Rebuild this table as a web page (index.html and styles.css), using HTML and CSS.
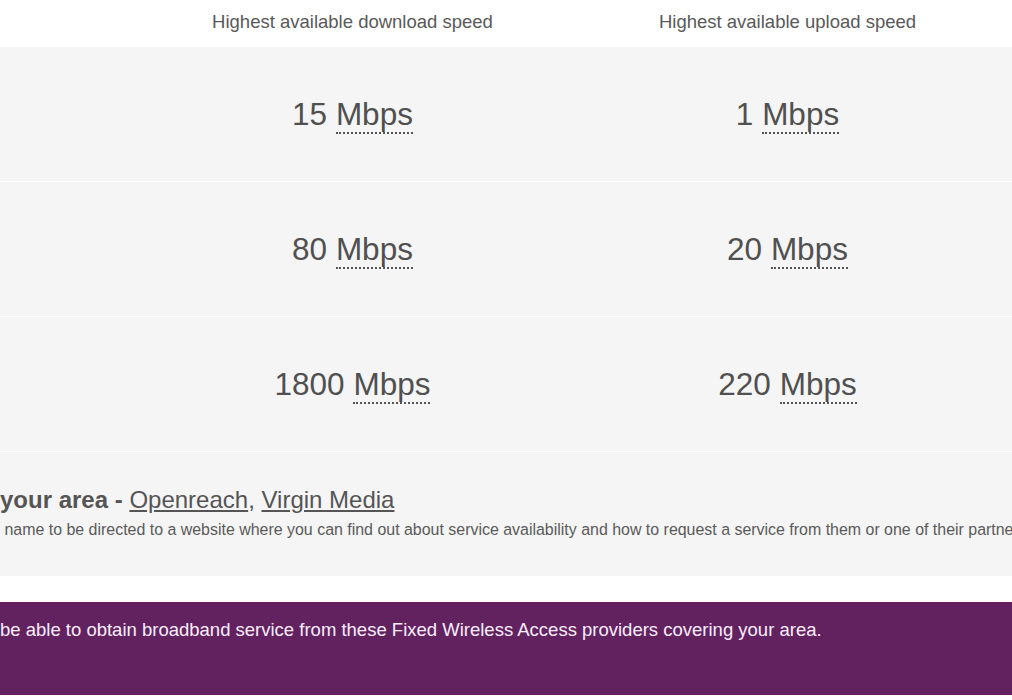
FILE: index.html
```html
<!DOCTYPE html>
<html lang="en">
<head>
<meta charset="utf-8">
<title>Broadband speeds</title>
<link rel="stylesheet" href="styles.css">
</head>
<body>
<div class="page">
  <div class="speeds">
    <div class="row head">
      <div class="cell label"></div>
      <div class="cell"><span>Highest available download speed</span></div>
      <div class="cell"><span>Highest available upload speed</span></div>
      <div class="cell rest"></div>
    </div>
    <div class="row data">
      <div class="cell label"></div>
      <div class="cell value"><span>15 <abbr title="Megabits per second">Mbps</abbr></span></div>
      <div class="cell value"><span>1 <abbr title="Megabits per second">Mbps</abbr></span></div>
      <div class="cell rest"></div>
    </div>
    <div class="row data">
      <div class="cell label"></div>
      <div class="cell value"><span>80 <abbr title="Megabits per second">Mbps</abbr></span></div>
      <div class="cell value"><span>20 <abbr title="Megabits per second">Mbps</abbr></span></div>
      <div class="cell rest"></div>
    </div>
    <div class="row data">
      <div class="cell label"></div>
      <div class="cell value"><span>1800 <abbr title="Megabits per second">Mbps</abbr></span></div>
      <div class="cell value"><span>220 <abbr title="Megabits per second">Mbps</abbr></span></div>
      <div class="cell rest"></div>
    </div>
    <div class="providers">
      <p class="prov-title"><strong>your area - </strong><a href="#">Openreach</a>, <a href="#">Virgin Media</a></p>
      <p class="prov-note">&nbsp;name to be directed to a website where you can find out about service availability and how to request a service from them or one of their partners.</p>
    </div>
  </div>
  <div class="fwa">
    <p>be able to obtain broadband service from these Fixed Wireless Access providers covering your area.</p>
  </div>
</div>
</body>
</html>
```

FILE: styles.css
```css
html, body {
  margin: 0;
  padding: 0;
  background: #ffffff;
}

body {
  font-family: "Liberation Sans", Arial, sans-serif;
  color: #555555;
  overflow: hidden;
}

.page {
  width: 1012px;
  overflow: hidden;
}

.speeds {
  display: flex;
  flex-direction: column;
}

.row {
  display: grid;
  grid-template-columns: 135px 435px 435px 1fr;
}

.cell {
  display: flex;
  align-items: center;
  justify-content: center;
  white-space: nowrap;
}

.head {
  height: 47px;
  background: #ffffff;
  font-size: 18.5px;
  color: #595959;
}

.head .cell {
  padding-bottom: 4px;
}

.data {
  height: 134px;
  background: #f5f5f5;
  border-bottom: 1px solid #ffffff;
  font-size: 31.5px;
  color: #505050;
}

abbr {
  text-decoration: none;
  border-bottom: 2px dotted #555555;
}

.providers {
  background: #f5f5f5;
  height: 124px;
  box-sizing: border-box;
  padding-top: 34px;
  white-space: nowrap;
  overflow: hidden;
}

.providers .prov-title {
  margin: 0;
  font-size: 24px;
  line-height: 28px;
  color: #555555;
}

.prov-title strong {
  font-weight: bold;
}

.prov-title a {
  color: #555555;
  text-decoration: underline;
  text-underline-offset: 2px;
}

.providers .prov-note {
  margin: 6px 0 0;
  font-size: 15.95px;
  line-height: 20px;
  color: #5a5a5a;
}

.fwa {
  margin-top: 26px;
  height: 93px;
  background: #622260;
  box-sizing: border-box;
  padding-top: 17px;
}

.fwa p {
  margin: 0;
  font-size: 18.5px;
  line-height: 22px;
  color: #fbeefa;
  white-space: nowrap;
}
```
